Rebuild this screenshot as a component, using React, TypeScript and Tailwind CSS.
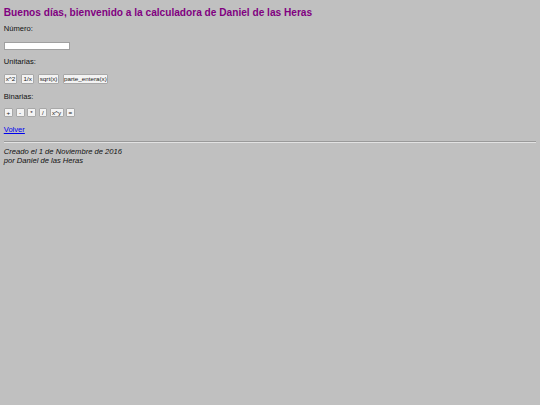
import React from "react";

const unitarias = [
  { label: "x^2", w: "w-[13.5px]" },
  { label: "1/x", w: "w-[12.7px]" },
  { label: "sqrt(x)", w: "w-[21.3px]" },
  { label: "parte_entera(x)", w: "w-[44.3px]" },
];

const binarias = [
  { label: "+", w: "w-[9.3px]" },
  { label: "-", w: "w-[9px]" },
  { label: "*", w: "w-[9px]" },
  { label: "/", w: "w-[8.5px]" },
  { label: "x^y", w: "w-[14px]" },
  { label: "=", w: "w-[8.7px]" },
];

function CalcButton({ label, w }: { label: string; w: string }) {
  return (
    <button
      type="button"
      className={`${w} h-full flex items-center justify-center bg-[#f3f3f3] border-[0.5px] border-[#a8a8a8] rounded-[1px] text-[6.25px] leading-none text-[#222] whitespace-nowrap`}
    >
      {label}
    </button>
  );
}

export default function App() {
  return (
    <div
      className="min-h-screen bg-[#c0c0c0] text-[#111] px-[3.75px] pt-[7px] flex flex-col"
      style={{ fontFamily: '"Liberation Sans", Arial, sans-serif' }}
    >
      <h2 className="h-[11.5px] text-[10.15px] leading-[11.5px] font-bold text-[#800080] whitespace-nowrap">
        Buenos días, bienvenido a la calculadora de Daniel de las Heras
      </h2>

      <p className="mt-[6.1px] h-[8.6px] text-[7.6px] leading-[8.6px]">Número:</p>

      <input
        type="text"
        className="mt-[9.3px] h-[8px] w-[66px] bg-white border-[0.5px] border-[#a0a0a0] outline-none"
      />

      <p className="mt-[7.6px] h-[8.6px] text-[7.6px] leading-[8.6px]">Unitarias:</p>

      <div className="mt-[7.8px] h-[9.5px] flex gap-[4px]">
        {unitarias.map((b) => (
          <CalcButton key={b.label} label={b.label} w={b.w} />
        ))}
      </div>

      <p className="mt-[8.6px] h-[8.6px] text-[7.6px] leading-[8.6px]">Binarias:</p>

      <div className="mt-[7.1px] h-[9px] flex gap-[2.5px]">
        {binarias.map((b) => (
          <CalcButton key={b.label} label={b.label} w={b.w} />
        ))}
      </div>

      <a
        href="#"
        className="mt-[8.3px] h-[8.6px] text-[7.6px] leading-[8.6px] text-[#0000ee] underline self-start"
      >
        Volver
      </a>

      <div className="mt-[6.8px] h-[2px] border-t border-b border-t-[#9a9a9a] border-b-[#e2e2e2]" />

      <address className="mt-[5.1px] text-[7.6px] leading-[8.6px] italic">
        Creado el 1 de Noviembre de 2016
        <br />
        por Daniel de las Heras
      </address>
    </div>
  );
}
